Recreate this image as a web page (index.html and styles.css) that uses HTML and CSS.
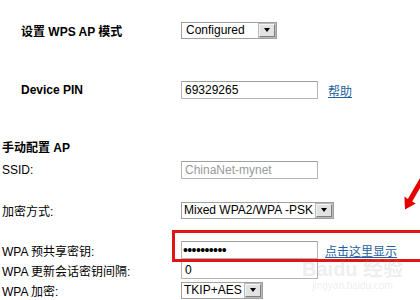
FILE: index.html
```html
<!DOCTYPE html>
<html lang="zh">
<head>
    <meta charset="UTF-8">
    <meta name="viewport" content="width=device-width, initial-scale=1.0">
    <title>WPS 设置</title>
    <link rel="stylesheet" href="styles.css">
</head>
<body>
    <div class="page">
        <div class="wps">
            <div class="row">
                <div class="label bold">设置 WPS AP 模式</div>
                <div class="select w-mode"><span class="val">Configured</span><span class="btn"></span></div>
            </div>
            <div class="row">
                <div class="label bold">Device PIN</div>
                <div class="box">69329265</div>
                <a class="link link-help" href="#">帮助</a>
            </div>
        </div>

        <div class="manual">
            <div class="heading">手动配置 AP</div>
            <div class="row first">
                <div class="label">SSID:</div>
                <div class="box disabled">ChinaNet-mynet</div>
            </div>
            <div class="row">
                <div class="label">加密方式:</div>
                <div class="select w-auth"><span class="val">Mixed WPA2/WPA -PSK</span><span class="btn"></span></div>
            </div>
            <div class="row">
                <div class="label">WPA 预共享密钥:</div>
                <div class="box dots">••••••••••</div>
                <a class="link link-show" href="#">点击这里显示</a>
            </div>
            <div class="row tight">
                <div class="label">WPA 更新会话密钥间隔:</div>
                <div class="box">0</div>
            </div>
            <div class="row tight">
                <div class="label">WPA 加密:</div>
                <div class="select w-cipher"><span class="val">TKIP+AES</span><span class="btn"></span></div>
            </div>
        </div>

        <!-- 标注：红框 + 箭头 + 水印 -->
        <div class="callout"></div>
        <svg class="arrow" width="20" height="40" viewBox="0 0 20 40">
            <polygon points="5,34.5 4.4,21.6 7.8,24 20.3,2.4 24.7,4.9 12.2,26.5 15.8,28.6" fill="#e60000"/>
        </svg>
        <div class="mark">
            <div class="mark-logo">Bai<span class="du">du</span> 经验</div>
            <div class="mark-url">jingyan.baidu.com</div>
        </div>
    </div>
</body>
</html>
```

FILE: styles.css
```css
body {
    margin: 0;
    background-color: #ffffff;
    font-family: "Liberation Sans", Arial, "Noto Sans CJK SC", sans-serif;
    font-size: 12px;
    color: #000;
}
.page {
    position: relative;
    width: 420px;
    height: 300px;
    overflow: hidden;
}
.wps {
    padding: 20px 0 0 21px;
}
.wps .row + .row {
    margin-top: 40px;
}
.row {
    display: flex;
    align-items: center;
    height: 20px;
}
.label {
    width: 160px;
    flex-shrink: 0;
    white-space: nowrap;
}
.manual .label {
    width: 179px;
}
.bold {
    font-weight: bold;
}
.manual {
    padding: 41px 0 0 2px;
}
.heading {
    font-weight: bold;
    height: 14px;
    line-height: 14px;
}
.manual .row {
    margin-top: 20px;
}
.manual .row.first {
    margin-top: 5px;
}
.manual .row.tight {
    margin-top: 0;
}
.box {
    box-sizing: border-box;
    width: 137px;
    height: 18px;
    line-height: 16px;
    padding: 0 3px;
    border: 1px solid #b4b4b4;
    border-top-color: #a0a0a0;
    white-space: nowrap;
    overflow: hidden;
}
.box.disabled {
    color: #9a9a9a;
}
.box.dots {
    font-size: 14px;
    letter-spacing: -0.6px;
    padding-left: 1px;
}
.select {
    box-sizing: border-box;
    height: 17px;
    display: flex;
    align-items: center;
    justify-content: space-between;
    border: 1px solid #a0a0a0;
    padding: 0 1px 0 4px;
}
.w-mode { width: 96px; }
.w-auth { width: 153px; padding-left: 2px; }
.w-cipher { width: 82px; padding-left: 2px; }
.select .val {
    white-space: nowrap;
    line-height: 15px;
}
.btn {
    box-sizing: border-box;
    width: 16px;
    height: 13px;
    background-color: #e2e2e2;
    border: 1px solid #808080;
    border-top-color: #f4f4f4;
    border-left-color: #f4f4f4;
    box-shadow: 0 0 0 1px #b8b8b8;
    display: flex;
    align-items: center;
    justify-content: center;
    flex-shrink: 0;
}
.btn::after {
    content: "";
    border-left: 3.5px solid transparent;
    border-right: 3.5px solid transparent;
    border-top: 4px solid #000;
}
.link {
    color: #1f5fa0;
    text-decoration: underline;
    white-space: nowrap;
    font-family: "Noto Sans CJK SC", sans-serif;
}
.link-help {
    margin-left: 10px;
}
.link-show {
    margin-left: 7px;
}
.callout {
    position: absolute;
    left: 172px;
    top: 230px;
    width: 260px;
    height: 32px;
    box-sizing: border-box;
    border: 3px solid #e01515;
}
.arrow {
    position: absolute;
    left: 400px;
    top: 175px;
}
.mark {
    position: absolute;
    left: 302px;
    top: 258px;
    color: rgba(150, 150, 150, 0.18);
    text-align: center;
}
.mark-logo {
    font-size: 20px;
    font-weight: bold;
    line-height: 22px;
}
.mark-url {
    font-size: 10px;
    line-height: 12px;
}
```
